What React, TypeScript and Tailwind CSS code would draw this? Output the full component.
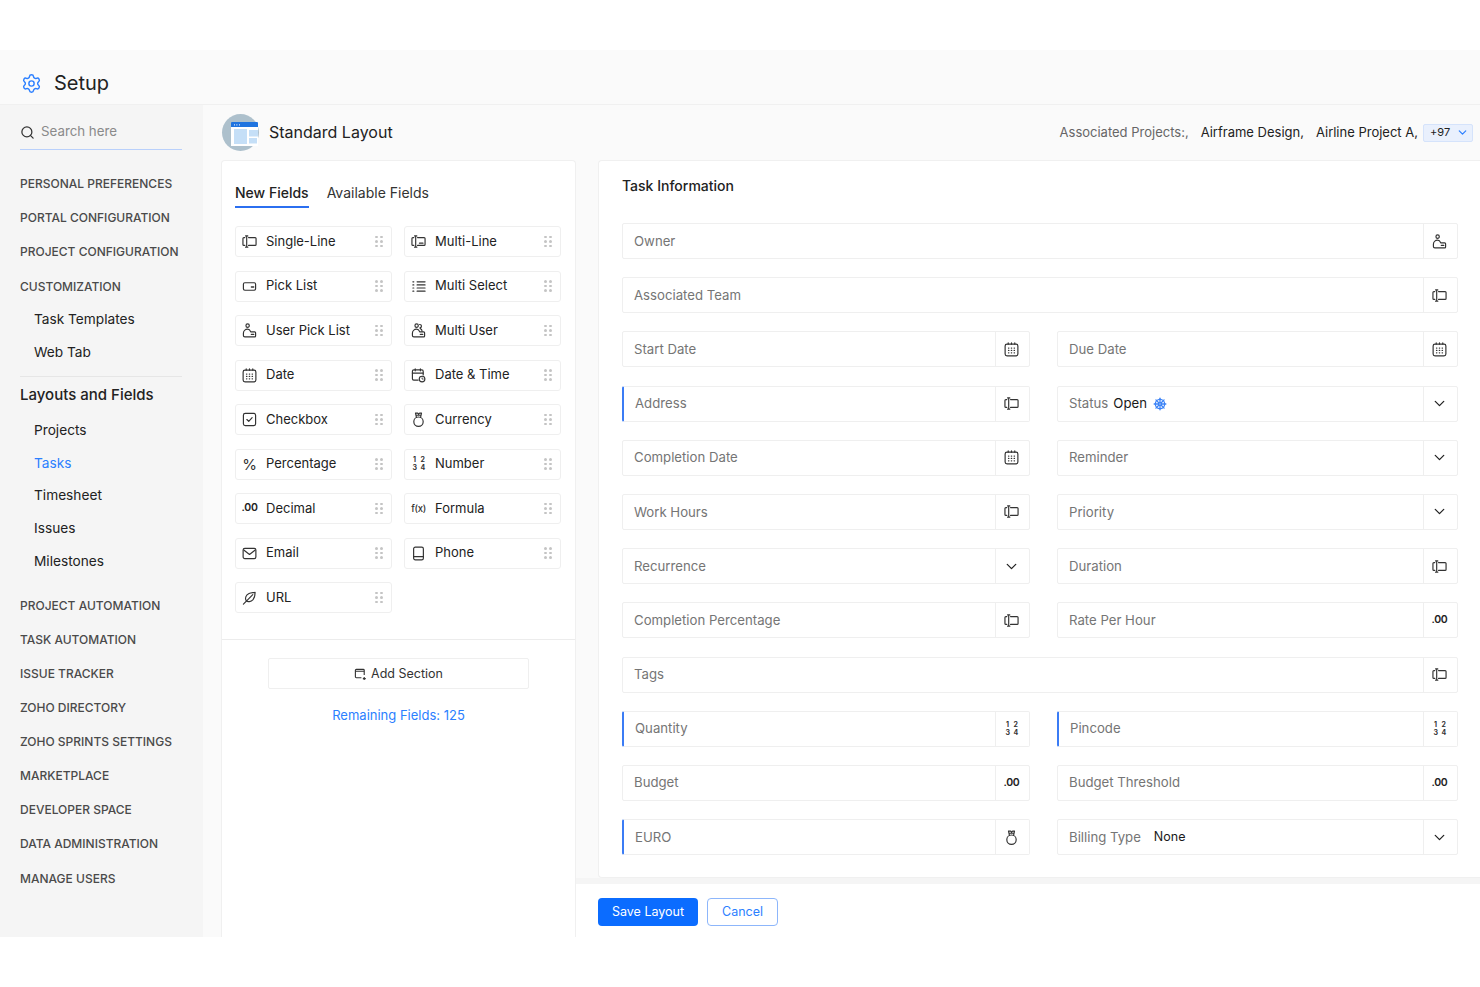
import { ChevronDown, Search, Settings, ShipWheel } from "lucide-react";
import type { ReactNode } from "react";

type IconName =
  | "single"
  | "multi"
  | "pick"
  | "select"
  | "user"
  | "users"
  | "date"
  | "datetime"
  | "check"
  | "currency"
  | "percent"
  | "number"
  | "decimal"
  | "formula"
  | "email"
  | "phone"
  | "url"
  | "chevron";

const Svg = ({ children }: { children: ReactNode }) => (
  <svg
    viewBox="0 0 16 16"
    fill="none"
    stroke="#333"
    strokeWidth="1.25"
    strokeLinecap="round"
    strokeLinejoin="round"
    className="w-[15px] h-[15px]"
  >
    {children}
  </svg>
);

const FieldIcon = ({ name }: { name: IconName }) => {
  switch (name) {
    case "single":
      return (
        <Svg>
          <path d="M7 3.8H14A1 1 0 0 1 15 4.8V11.2A1 1 0 0 1 14 12.2H7" />
          <path d="M5 2.2V13.800M3.800 2H6.200M3.800 14H6.200M3 3.800H2A1 1 0 0 0 1 4.800V11.200A1 1 0 0 0 2 12.200H3" />
        </Svg>
      );
    case "multi":
      return (
        <Svg>
          <path d="M7 3.800H14A1 1 0 0 1 15 4.800V11.200A1 1 0 0 1 14 12.200H7" />
          <path d="M5 2.200V13.800M3.800 2H6.200M3.800 14H6.200M3 3.800H2A1 1 0 0 0 1 4.800V11.200A1 1 0 0 0 2 12.200H3M9 9.800H12.800" />
        </Svg>
      );
    case "pick":
      return (
        <Svg>
          <rect x="1.500" y="4" width="13" height="8" rx="1.500" />
          <path d="M10 8.500H12.500" strokeWidth="1.400" />
        </Svg>
      );
    case "select":
      return (
        <Svg>
          <path d="M6.500 3H15M6.500 6.300H15M6.500 9.600H15M6.500 13H15" />
          <path d="M2 3H4M2 6.300H4M2 9.600H4M2 13H4" strokeDasharray="1 1.200" />
        </Svg>
      );
    case "user":
      return (
        <Svg>
          <circle cx="6" cy="2.800" r="1.800" />
          <path d="M3 14.800H13.500A1 1 0 0 0 14.500 13.800V10.500A1 1 0 0 0 13.500 9.500H9.500C8.500 7.500 7.500 6.500 6 6.500C3.500 6.500 1.500 8.500 1.500 11V13.300A1.500 1.500 0 0 0 3 14.800Z" />
          <path d="M10 12.200H12.500" strokeWidth="1.400" />
        </Svg>
      );
    case "users":
      return (
        <Svg>
          <circle cx="6" cy="2.800" r="1.800" />
          <path d="M9.200 1.600A1.800 1.800 0 0 1 9.500 5.200M11.800 8.800C11.800 7.500 11 6.400 10 6" />
          <path d="M3 14.800H13.500A1 1 0 0 0 14.500 13.800V10.500A1 1 0 0 0 13.500 9.500H9.500C8.500 7.500 7.500 6.500 6 6.500C3.500 6.500 1.500 8.500 1.500 11V13.300A1.500 1.500 0 0 0 3 14.800Z" />
          <path d="M10 12.200H12.500" strokeWidth="1.400" />
        </Svg>
      );
    case "date":
      return (
        <Svg>
          <rect x="1.200" y="2.300" width="13.600" height="12.500" rx="2" />
          <path d="M4.500 1V2.300M8 1V2.300M11.500 1V2.300" />
          <path d="M4.800 6.500H5.200M7.800 6.500H8.200M10.800 6.500H11.200M4.800 9H5.200M7.800 9H8.200M10.800 9H11.200M4.800 11.500H5.200M7.800 11.500H8.200M10.800 11.500H11.200" strokeWidth="1.300" />
        </Svg>
      );
    case "datetime":
      return (
        <Svg>
          <path d="M7.500 13H3A1.500 1.500 0 0 1 1.500 11.500V3.500A1.500 1.500 0 0 1 3 2H11.500A1.500 1.500 0 0 1 13 3.500V7.500" />
          <path d="M4.500 1V3M10 1V3M1.500 5.500H13" />
          <circle cx="11.800" cy="11.800" r="3" />
          <path d="M11.800 10.500V11.800H13" strokeWidth="0.900" />
        </Svg>
      );
    case "check":
      return (
        <Svg>
          <rect x="1.500" y="1.500" width="13" height="13" rx="2" />
          <path d="M5.200 8L7.200 10L10.800 6" />
        </Svg>
      );
    case "currency":
      return (
        <Svg>
          <circle cx="8" cy="10.300" r="5" />
          <path d="M5.800 5.800L4.800 1.200H7.200L8 2.400L9.200 1.200H11.200L10.200 5.800M5.300 3.500H10.700" />
        </Svg>
      );
    case "percent":
      return <span className="text-[15px] leading-none text-[#333]">%</span>;
    case "number":
      return (
        <span className="grid grid-cols-[4px_4px] gap-x-[4px] font-bold text-[7px] leading-[8px] text-[#333] text-center">
          <span>1</span>
          <span>2</span>
          <span>3</span>
          <span>4</span>
        </span>
      );
    case "decimal":
      return <span className="font-semibold text-[10.5px] leading-none tracking-[-0.3px] text-[#222]">.00</span>;
    case "formula":
      return <span className="font-medium text-[9.5px] leading-none tracking-[-0.3px] text-[#333]">f(x)</span>;
    case "email":
      return (
        <Svg>
          <rect x="1.200" y="2.500" width="13.600" height="11" rx="1.800" />
          <path d="M2.200 4.500L8 9L13.800 4.500" />
        </Svg>
      );
    case "phone":
      return (
        <Svg>
          <rect x="2.800" y="1.200" width="10.400" height="13.600" rx="1.800" />
          <path d="M2.800 11.300H13.200" />
        </Svg>
      );
    case "url":
      return (
        <Svg>
          <path d="M4.500 11.500C2.800 9 4 5.500 7.500 3.800C9.700 2.800 12 3 14 2.500C14 4.800 13.800 8 11.800 10.300C9.500 12.700 6 13 4.500 11.500Z" />
          <path d="M1.500 15L11.500 5" />
        </Svg>
      );
    default:
      return <ChevronDown className="w-[17px] h-[17px] text-[#222]" strokeWidth={1.8} />;
  }
};

const DragDots = () => (
  <span className="grid grid-cols-2 gap-x-[3px] gap-y-[2px] w-[7px] shrink-0">
    {[0, 1, 2, 3, 4, 5].map((i) => (
      <span key={i} className="w-[2.5px] h-[2.5px] rounded-full bg-[#c4c4c4]" />
    ))}
  </span>
);

const topNav = ["PERSONAL PREFERENCES", "PORTAL CONFIGURATION", "PROJECT CONFIGURATION", "CUSTOMIZATION"];
const bottomNav = [
  "PROJECT AUTOMATION",
  "TASK AUTOMATION",
  "ISSUE TRACKER",
  "ZOHO DIRECTORY",
  "ZOHO SPRINTS SETTINGS",
  "MARKETPLACE",
  "DEVELOPER SPACE",
  "DATA ADMINISTRATION",
  "MANAGE USERS",
];
const layoutNav = ["Projects", "Tasks", "Timesheet", "Issues", "Milestones"];

const newFields: { label: string; icon: IconName }[] = [
  { label: "Single-Line", icon: "single" },
  { label: "Multi-Line", icon: "multi" },
  { label: "Pick List", icon: "pick" },
  { label: "Multi Select", icon: "select" },
  { label: "User Pick List", icon: "user" },
  { label: "Multi User", icon: "users" },
  { label: "Date", icon: "date" },
  { label: "Date & Time", icon: "datetime" },
  { label: "Checkbox", icon: "check" },
  { label: "Currency", icon: "currency" },
  { label: "Percentage", icon: "percent" },
  { label: "Number", icon: "number" },
  { label: "Decimal", icon: "decimal" },
  { label: "Formula", icon: "formula" },
  { label: "Email", icon: "email" },
  { label: "Phone", icon: "phone" },
  { label: "URL", icon: "url" },
];

interface LayoutField {
  label: string;
  icon: IconName;
  wide?: boolean;
  required?: boolean;
  value?: string;
}

const layoutFields: LayoutField[] = [
  { label: "Owner", icon: "user", wide: true },
  { label: "Associated Team", icon: "single", wide: true },
  { label: "Start Date", icon: "date" },
  { label: "Due Date", icon: "date" },
  { label: "Address", icon: "single", required: true },
  { label: "Status", icon: "chevron", value: "Open" },
  { label: "Completion Date", icon: "date" },
  { label: "Reminder", icon: "chevron" },
  { label: "Work Hours", icon: "single" },
  { label: "Priority", icon: "chevron" },
  { label: "Recurrence", icon: "chevron" },
  { label: "Duration", icon: "single" },
  { label: "Completion Percentage", icon: "single" },
  { label: "Rate Per Hour", icon: "decimal" },
  { label: "Tags", icon: "single", wide: true },
  { label: "Quantity", icon: "number", required: true },
  { label: "Pincode", icon: "number", required: true },
  { label: "Budget", icon: "decimal" },
  { label: "Budget Threshold", icon: "decimal" },
  { label: "EURO", icon: "currency", required: true },
  { label: "Billing Type", icon: "chevron", value: "None" },
];

const LayoutRow = ({ field }: { field: LayoutField }) => (
  <div
    className={`h-9 flex items-center bg-white border border-[#efefef] rounded-[2px] ${field.wide ? "col-span-2" : ""} ${
      field.required ? "border-l-2 border-l-[#3b7cf5]" : ""
    }`}
  >
    <div className="flex-1 flex items-center pl-[11px] pt-px text-[13.2px] text-[#757575]">
      <span>{field.label}</span>
      {field.value === "Open" && (
        <>
          <span className="ml-[5px] text-[#1a1a1a]">Open</span>
          <ShipWheel className="ml-[6px] w-[14px] h-[14px] text-[#3b82f6]" strokeWidth={2.2} />
        </>
      )}
      {field.value === "None" && <span className="ml-[13px] text-[12.5px] text-[#1a1a1a]">None</span>}
    </div>
    <div className="w-[34px] h-full shrink-0 flex items-center justify-center pr-[2px] border-l border-[#efefef]">
      <FieldIcon name={field.icon} />
    </div>
  </div>
);

export default function App() {
  return (
    <div className="w-[1480px] h-[987px] bg-white flex flex-col overflow-hidden font-['Inter',sans-serif] text-[#222]">
      <div className="h-[50px] shrink-0" />
      <div className="h-[887px] flex flex-col bg-[#fafafa]">
        <header className="h-[55px] shrink-0 flex items-center pt-[12px] pl-[21px] border-b border-[#f0f0f0]">
          <Settings className="w-[21px] h-[21px] text-[#2b7fff]" strokeWidth={1.6} />
          <span className="ml-[12px] text-[20px] text-[#222]">Setup</span>
        </header>
        <div className="flex-1 flex min-h-0">
          <aside className="w-[203px] shrink-0 bg-[#f5f5f5] pl-[20px] flex flex-col">
            <div className="w-[162px] h-[45px] flex items-center gap-[6px] border-b-[1.5px] border-[#b9d0fb] pt-[10px]">
              <Search className="w-[15px] h-[15px] text-[#333]" strokeWidth={2} />
              <span className="text-[13.3px] text-[#8a8a8a]">Search here</span>
            </div>
            <div className="mt-[17px] flex flex-col">
              {topNav.map((item) => (
                <div key={item} className="h-[34.2px] flex items-center text-[12px] font-medium text-[#4a4a4a]">
                  {item}
                </div>
              ))}
              <div className="-mt-px" />
              {["Task Templates", "Web Tab"].map((item) => (
                <div key={item} className="h-[33px] flex items-center pl-[14px] text-[13.7px] text-[#222]">
                  {item}
                </div>
              ))}
              <div className="w-[162px] h-px bg-[#e6e6e6] mt-[7px]" />
              <div className="h-[37px] flex items-center text-[15px] font-medium text-[#222]">Layouts and Fields</div>
              {layoutNav.map((item) => (
                <div
                  key={item}
                  className={`h-[32.8px] flex items-center pl-[14px] text-[13.7px] ${item === "Tasks" ? "text-[#2b7fff]" : "text-[#222]"}`}
                >
                  {item}
                </div>
              ))}
              <div className="h-[11px]" />
              {bottomNav.map((item) => (
                <div key={item} className="h-[34.1px] flex items-center text-[12px] font-medium text-[#4a4a4a]">
                  {item}
                </div>
              ))}
            </div>
          </aside>
          <main className="flex-1 flex flex-col min-w-0">
            <div className="h-[55px] shrink-0 flex items-center justify-between pl-[19px] pr-[7px]">
              <div className="flex items-center gap-[10px]">
                <div className="w-[37px] h-[37px] rounded-full bg-[#adc0cc]">
                  <svg viewBox="0 0 37 37" className="w-[37px] h-[37px]">
                    <rect x="9" y="8" width="27" height="6" rx="1" fill="#1f74e0" />
                    <rect x="9" y="13" width="27" height="19" fill="#fff" />
                    <rect x="12" y="15" width="13" height="15" fill="#c5dff7" />
                    <rect x="27" y="16" width="9" height="6.500" fill="#c5dff7" />
                    <rect x="27" y="24" width="8" height="5.500" fill="#c5dff7" />
                    <path d="M12 10.800H12.800M14.500 10.800H15.300M17 10.800H17.800" stroke="#fff" strokeWidth="1.200" />
                  </svg>
                </div>
                <span className="-mt-[2px] text-[16px] text-[#222]">Standard Layout</span>
              </div>
              <div className="flex items-center text-[13px]">
                <span className="text-[#666]">Associated Projects:,</span>
                <span className="ml-[12px] text-[#222]">Airframe Design,</span>
                <span className="ml-[12px] text-[#222]">Airline Project A,</span>
                <span className="ml-[5px] w-[50px] h-[18px] pl-[6px] pr-[3px] flex items-center justify-between rounded-[2px] bg-[#e9f0fd] border border-[#d5e3fb] text-[11px] text-[#222]">
                  +97
                  <ChevronDown className="w-[13px] h-[13px] text-[#2b7fff]" strokeWidth={2.2} />
                </span>
              </div>
            </div>
            <div className="flex-1 flex min-h-0">
              <section className="w-[355px] ml-[18px] shrink-0 bg-white border-x border-t border-[#f0f0f0] rounded-t-[4px] flex flex-col">
                <div className="h-[479px] shrink-0 px-[13px] border-b border-[#ececec]">
                  <div className="flex gap-[18px] pt-[21px] text-[14px]">
                    <div className="h-[26px] border-b-2 border-[#2b6ff0] font-medium text-[#222]">New Fields</div>
                    <div className="h-[26px] text-[#333]">Available Fields</div>
                  </div>
                  <div className="mt-[18px] grid grid-cols-[157px_157px] gap-x-[12px] gap-y-[13.5px]">
                    {newFields.map((f) => (
                      <div
                        key={f.label}
                        className="h-[31px] flex items-center border border-[#efefef] rounded-[3px] pl-[6px] pr-[9px]"
                      >
                        <span className="w-[15px] h-[15px] flex items-center justify-center shrink-0">
                          <FieldIcon name={f.icon} />
                        </span>
                        <span className="ml-[9px] flex-1 text-[13px] text-[#222]">{f.label}</span>
                        <DragDots />
                      </div>
                    ))}
                  </div>
                </div>
                <div className="flex flex-col items-center pt-[18px]">
                  <div className="w-[261px] h-[31px] pt-px flex items-center justify-center gap-[4px] border border-[#efefef] rounded-[2px] text-[12.5px] text-[#333]">
                    <svg viewBox="0 0 14 14" fill="none" stroke="#333" strokeWidth="1.200" className="w-[13px] h-[13px]">
                      <path d="M8 10.500H2.500A1 1 0 0 1 1.500 9.500V2.500A1 1 0 0 1 2.500 1.500H10A1 1 0 0 1 11 2.500V7.500" />
                      <path d="M1.500 3.500H11M11 9.800V13M9.500 11.500H12.700" />
                    </svg>
                    Add Section
                  </div>
                  <div className="mt-[17px] text-[13px] text-[#2b7fff]">Remaining Fields: 125</div>
                </div>
              </section>
              <div className="flex-1 flex flex-col ml-0 min-w-0">
                <div className="h-[718px] shrink-0 pl-[22px]">
                  <div className="h-full bg-white border-l border-t border-b border-[#f0f0f0] rounded-tl-[4px] rounded-bl-[4px] pl-[23px]">
                    <div className="h-[48px] pt-[14px] text-[14px] font-medium text-[#222]">Task Information</div>
                    <div className="mt-[14px] grid grid-cols-[408px_401px] gap-x-[27px] gap-y-[18.2px]">
                      {layoutFields.map((f) => (
                        <LayoutRow key={f.label} field={f} />
                      ))}
                    </div>
                  </div>
                </div>
                <div className="h-[6px] shrink-0 bg-[#f5f5f5]" />
                <footer className="flex-1 bg-white flex items-center pl-[22px] pt-[3px] gap-[9px] text-[12.5px]">
                  <button className="w-[100px] h-[28px] pt-px rounded-[4px] bg-[#0b6cff] text-white">Save Layout</button>
                  <button className="w-[71px] h-[28px] pt-px rounded-[4px] border border-[#8db6fb] text-[#2b7fff]">Cancel</button>
                </footer>
              </div>
            </div>
          </main>
        </div>
      </div>
    </div>
  );
}
